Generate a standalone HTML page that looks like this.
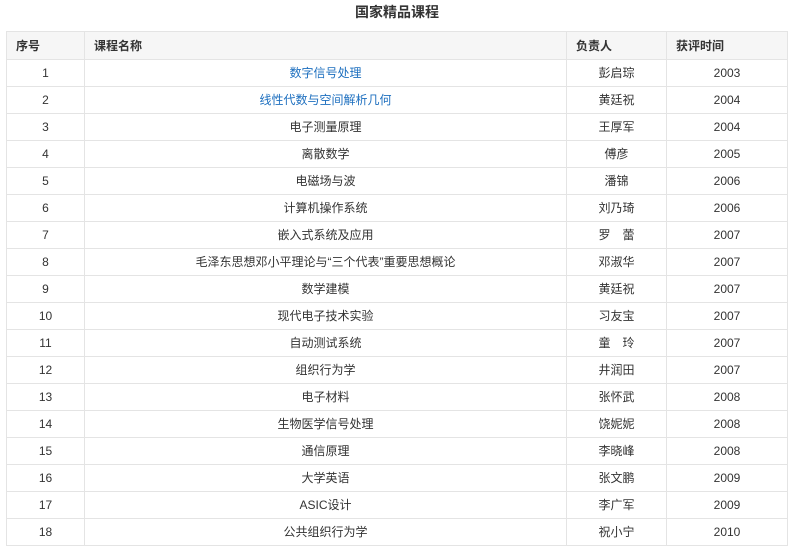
<!DOCTYPE html>
<html><head><meta charset="utf-8"><style>
body{margin:0;background:#fff;font-family:"Liberation Sans","Noto Sans CJK SC",sans-serif;font-size:12px;color:#333;}
h1{margin:0;position:absolute;top:3px;left:0;width:794px;text-align:center;font-size:14px;font-weight:bold;line-height:18px;color:#333}
table{position:absolute;left:6px;top:31px;border-collapse:collapse;width:782px}
td,th{border:1px solid #e4e4e4;height:26px;padding:0;text-align:center;line-height:14px}
td span{display:inline-block;line-height:14px;vertical-align:top;margin-top:-1px}
th{background:#f6f6f6;text-align:left;padding-left:9px;font-weight:bold;height:27px;font-size:12px}
a{color:#1d6fbf;text-decoration:none}
</style></head><body>
<h1>国家精品课程</h1>
<table>
<colgroup><col style="width:78px"><col style="width:482px"><col style="width:100px"><col></colgroup>
<tr><th>序号</th><th>课程名称</th><th>负责人</th><th>获评时间</th></tr>
<tr><td>1</td><td><a>数字信号处理</a></td><td>彭启琮</td><td>2003</td></tr>
<tr><td>2</td><td><a>线性代数与空间解析几何</a></td><td>黄廷祝</td><td>2004</td></tr>
<tr><td>3</td><td>电子测量原理</td><td>王厚军</td><td>2004</td></tr>
<tr><td>4</td><td>离散数学</td><td>傅彦</td><td>2005</td></tr>
<tr><td>5</td><td>电磁场与波</td><td>潘锦</td><td>2006</td></tr>
<tr><td>6</td><td>计算机操作系统</td><td>刘乃琦</td><td>2006</td></tr>
<tr><td>7</td><td>嵌入式系统及应用</td><td>罗　蕾</td><td>2007</td></tr>
<tr><td>8</td><td>毛泽东思想邓小平理论与“三个代表”重要思想概论</td><td>邓淑华</td><td>2007</td></tr>
<tr><td>9</td><td>数学建模</td><td>黄廷祝</td><td>2007</td></tr>
<tr><td>10</td><td>现代电子技术实验</td><td>习友宝</td><td>2007</td></tr>
<tr><td>11</td><td>自动测试系统</td><td>童　玲</td><td>2007</td></tr>
<tr><td>12</td><td>组织行为学</td><td>井润田</td><td>2007</td></tr>
<tr><td>13</td><td>电子材料</td><td>张怀武</td><td>2008</td></tr>
<tr><td>14</td><td>生物医学信号处理</td><td>饶妮妮</td><td>2008</td></tr>
<tr><td>15</td><td>通信原理</td><td>李晓峰</td><td>2008</td></tr>
<tr><td>16</td><td>大学英语</td><td>张文鹏</td><td>2009</td></tr>
<tr><td>17</td><td>ASIC设计</td><td>李广军</td><td>2009</td></tr>
<tr><td>18</td><td>公共组织行为学</td><td>祝小宁</td><td>2010</td></tr>
</table>
</body></html>
